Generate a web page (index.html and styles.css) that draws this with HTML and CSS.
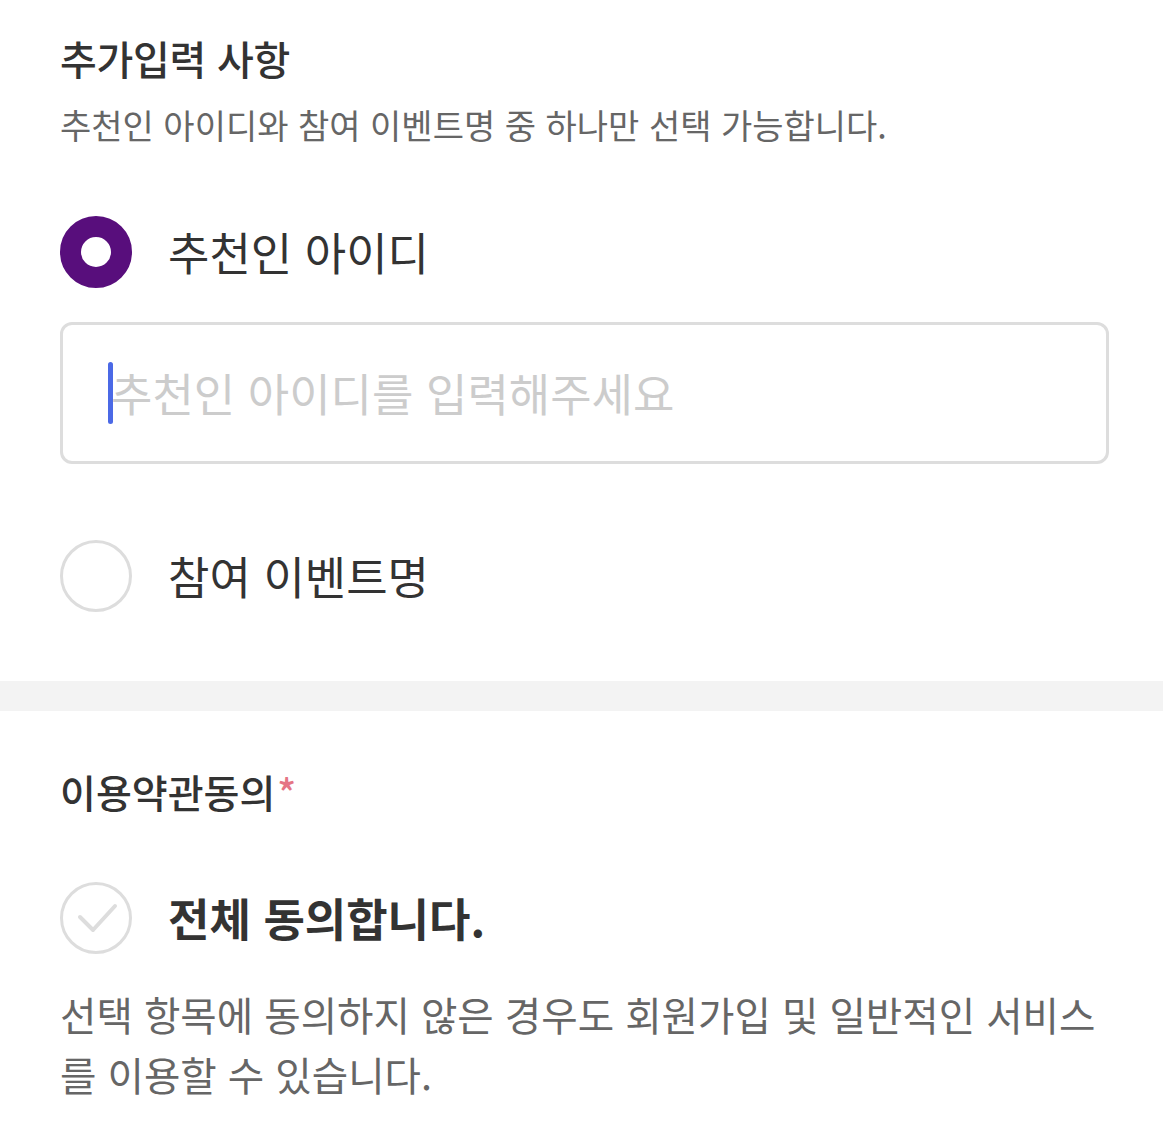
FILE: index.html
```html
<!DOCTYPE html>
<html lang="ko">
<head>
<meta charset="utf-8">
<link rel="stylesheet" href="styles.css">
</head>
<body>
<section class="section extra">
  <h2 class="title">추가입력 사항</h2>
  <p class="subtitle">추천인 아이디와 참여 이벤트명 중 하나만 선택 가능합니다.</p>

  <div class="option option-first">
    <span class="radio radio-checked"></span>
    <span class="option-label">추천인 아이디</span>
  </div>

  <div class="field">
    <span class="caret"></span>
    <span class="placeholder">추천인 아이디를 입력해주세요</span>
  </div>

  <div class="option option-second">
    <span class="radio"></span>
    <span class="option-label">참여 이벤트명</span>
  </div>
</section>

<div class="divider"></div>

<section class="section terms">
  <h2 class="terms-title">이용약관동의<span class="required">*</span></h2>

  <div class="option agree-all">
    <span class="check">
      <svg viewBox="0 0 72 72" width="72" height="72" aria-hidden="true">
        <polyline points="20,35 33,48 55,24" fill="none" stroke="#dddddd" stroke-width="4" stroke-linecap="round" stroke-linejoin="round"/>
      </svg>
    </span>
    <span class="agree-label">전체 동의합니다.</span>
  </div>

  <p class="desc">선택 항목에 동의하지 않은 경우도 회원가입 및 일반적인 서비스를 이용할 수 있습니다.</p>
</section>
</body>
</html>
```

FILE: styles.css
```css
* {
  box-sizing: border-box;
}

html, body {
  margin: 0;
  padding: 0;
  background: #ffffff;
}

body {
  font-family: "Noto Sans CJK KR", "Noto Sans", sans-serif;
  color: #333333;
  width: 1163px;
}

.section {
  padding: 0 54px 0 60px;
}

.extra {
  padding-top: 32px;
  padding-bottom: 69px;
}

.title {
  margin: 0;
  font-size: 40px;
  line-height: 52px;
  font-weight: 500;
  color: #333333;
  letter-spacing: -0.3px;
}

.subtitle {
  margin: 18px 0 0;
  font-size: 34px;
  line-height: 46px;
  font-weight: 400;
  color: #666666;
}

.option {
  display: flex;
  align-items: center;
  gap: 36px;
  height: 72px;
}

.option-first {
  margin-top: 68px;
}

.option-second {
  margin-top: 76px;
}

.radio {
  flex: none;
  width: 72px;
  height: 72px;
  border-radius: 50%;
  border: 3px solid #dddddd;
  background: #ffffff;
}

.radio-checked {
  border: 21px solid #580e7c;
  background: #ffffff;
}

.option-label {
  font-size: 45px;
  line-height: 60px;
  color: #333333;
}

.field {
  margin-top: 34px;
  height: 142px;
  border: 3px solid #dddddd;
  border-radius: 12px;
  display: flex;
  align-items: center;
  padding-left: 45px;
}

.caret {
  flex: none;
  width: 5px;
  height: 62px;
  border-radius: 3px;
  background: #4b69e6;
  margin-right: -2px;
}

.placeholder {
  font-size: 45px;
  line-height: 60px;
  color: #cccccc;
}

.divider {
  height: 30px;
  background: #f3f3f3;
}

.terms {
  padding-top: 55px;
  padding-bottom: 40px;
}

.terms-title {
  margin: 0;
  font-size: 39px;
  line-height: 50px;
  font-weight: 500;
  color: #333333;
}

.required {
  color: #e57584;
  margin-left: 2px;
}

.agree-all {
  margin-top: 66px;
}

.check {
  flex: none;
  width: 72px;
  height: 72px;
  border-radius: 50%;
  border: 3px solid #dddddd;
  display: flex;
  align-items: center;
  justify-content: center;
  overflow: hidden;
}

.check svg {
  flex: none;
}

.agree-label {
  font-size: 45px;
  line-height: 60px;
  font-weight: 700;
  color: #333333;
}

.desc {
  margin: 30px 0 0;
  font-size: 39.6px;
  line-height: 60px;
  color: #666666;
}
```
